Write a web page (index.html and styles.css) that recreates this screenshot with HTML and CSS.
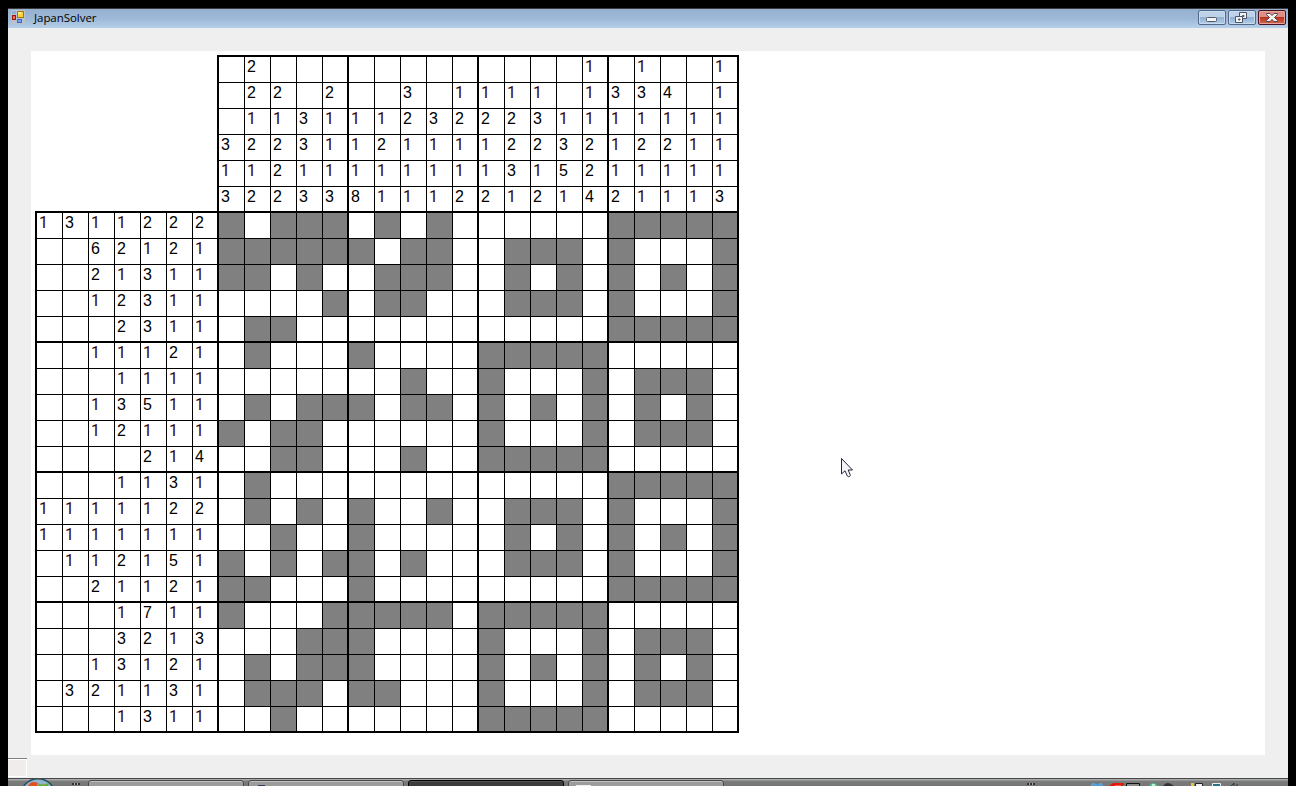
FILE: index.html
```html
<!DOCTYPE html>
<html lang="en">
<head>
<meta charset="utf-8">
<title>JapanSolver</title>
<link rel="stylesheet" href="styles.css">
</head>
<body>
<div class="screen">
  <div class="window">
    <header class="titlebar">
      <svg class="app-icon" width="14" height="14" viewBox="0 0 14 14">
        <rect width="14" height="14" fill="#b9c3cf"/>
        <rect x="1" y="1" width="4" height="3" fill="#8fb0d2"/>
        <rect x="6.5" y="1.5" width="6" height="6" fill="#ffd23c" stroke="#a87408"/>
        <rect x="7" y="2" width="3" height="2" fill="#ffeb94"/>
        <rect x="1.5" y="5.5" width="3" height="4" fill="#e86a58" stroke="#9c1408"/>
        <rect x="6.5" y="9.5" width="4" height="3" fill="#7da2f5" stroke="#3a66cc"/>
      </svg>
      <h1 class="title">JapanSolver</h1>
      <div class="controls">
        <button class="control" aria-label="Minimize">
          <svg width="24" height="11" viewBox="0 0 24 11"><rect x="6.5" y="5.5" width="10" height="4" rx="1" fill="#f4f4f4" stroke="#555b6b"/></svg>
        </button>
        <button class="control" aria-label="Restore">
          <svg width="24" height="11" viewBox="0 0 24 11"><g fill="#f4f4f4" stroke="#4c5468"><path d="M9.500.5h7v6h-7z"/><path d="M12.500 3.500h1.500v1h-1.500z"/><path d="M5.500 4.500h7v6h-7z"/><path d="M8.500 7h1.500v1h-1.500z" fill="#8fb0d2"/></g></svg>
        </button>
        <button class="control close" aria-label="Close">
          <svg width="24" height="11" viewBox="0 0 24 11"><path d="M6.500 1.500h3.500l2 2 2-2h3.500v1l-3 3 3 3v1h-3.500l-2-2-2 2h-3.500v-1l3-3-3-3z" fill="#f4f4f4" stroke="#5a4450"/></svg>
        </button>
      </div>
    </header>
    <main class="client">
      <section class="canvas">
        <div class="puzzle">
          <div class="corner"></div>
          <div class="cells column-hints" id="column-hints"></div>
          <div class="cells row-hints" id="row-hints"></div>
          <div class="cells field" id="field"></div>
        </div>
      </section>
      <div class="stub"></div>
    </main>
    <footer class="taskbar">
      <svg class="orb" width="36" height="7" viewBox="0 0 36 7">
        <circle cx="18" cy="17" r="18" fill="#254a63"/>
        <circle cx="18" cy="17" r="16.500" fill="#8db4cb"/>
        <path d="M8 7Q11 1 18 4L17 7z" fill="#e5501c"/>
        <path d="M19 4.500Q23 6.500 29 4L28 7H18z" fill="#6fa83a"/>
      </svg>
      <i class="grip"></i>
      <div class="tasks">
        <span class="task"></span>
        <span class="task"><i class="mark dark"></i></span>
        <span class="task active"></span>
        <span class="task"><i class="mark light"></i></span>
      </div>
      <i class="grip tray-grip"></i>
      <svg class="tray" width="160" height="4" viewBox="0 0 160 4">
        <path d="M1 4V2h1V1h3v1h2v1h1V2h1V1h3v1h1v2z" fill="#5aa0d4"/>
        <path d="M19 4l4-3h11v2l-2 1z" fill="#e01808"/><path d="M25 3h6v1h-6z" fill="#ff6048"/>
        <path d="M36.500 4V1.500h13V4" fill="#8a8a8a" stroke="#111"/>
        <path d="M59 4q4-6 9 0z" fill="#45c79c"/><path d="M62 2h3v2h-3z" fill="#b8f0d0"/>
        <path d="M73 4q4-6 11 0z" fill="#333"/>
        <path d="M101 1h3v3h-3z" fill="#ecc52d"/><path d="M105.500 4V1.500h7V4" fill="#eee" stroke="#222"/>
        <path d="M122.500 4V1.500h8V4" fill="#287090" stroke="#eee"/>
        <path d="M141 4l3-3v3M147 2v2" fill="none" stroke="#333"/>
      </svg>
    </footer>
  </div>
  <svg class="cursor" width="12" height="20" viewBox="0 0 12 20">
    <path d="M.5.500v15.500l3.500-3.200 2.300 5.200q1 1.200 2.400.4.900-.6.500-1.700l-2-4.700h4.300z" fill="#f5f5f8" stroke="#25253a"/>
  </svg>
</div>
<script src="puzzle.js"></script>
</body>
</html>
```
FILE: styles.css
```css
* { box-sizing: border-box; }
body { margin: 0; background: #000; }
.screen {
  position: relative;
  width: 1296px;
  height: 786px;
  padding: 8px 8px 0;
  overflow: hidden;
  background: #000;
}
.window { display: flex; flex-direction: column; height: 778px; }
.titlebar {
  display: flex;
  flex: none;
  height: 20px;
  border-top: 1px solid #393b3d;
  padding-left: 3px;
  background: linear-gradient(#96b1cf, #9db9d7 50%, #b6cfe9);
}
.app-icon { margin-top: 1px; }
.title {
  margin: 0 0 0 9px;
  font: 400 11.500px/18px "Open Sans", "Noto Sans", sans-serif;
  letter-spacing: -0.050px;
  color: #000;
}
.controls { display: flex; gap: 2px; margin: 1px 2px 0 auto; height: 15px; }
.control {
  display: block;
  width: 28px;
  height: 15px;
  padding: 1px;
  border: 1px solid #53688a;
  border-radius: 2px;
  box-shadow: inset 0 0 0 1px #c9dcef;
  background: linear-gradient(#bed3e9 45%, #91b0d1 50%, #b2cde8);
}
.control svg { display: block; }
.close {
  border-color: #4a1020;
  box-shadow: inset 0 0 0 1px #e3a79d;
  background: linear-gradient(#dd8e82 45%, #b93420 50%, #d0664e);
}
.client {
  display: flex;
  flex-direction: column;
  flex: 1;
  padding: 23px 23px 0;
  background: #efefef;
}
.canvas { flex: none; height: 704px; padding: 4px 0 0 4px; background: #fff; }
.stub {
  width: 19px;
  height: 18px;
  margin: 4px 0 0 -23px;
  border: solid #fff;
  border-width: 1px 1px 1px 0;
  box-shadow: 0 -1px #808080;
  background: #f0ecec;
}

.puzzle {
  display: grid;
  grid-template-columns: 182px 522px;
  grid-template-rows: 156px 522px;
  width: 704px;
}
.cells { display: grid; grid-auto-rows: 26px; }
.column-hints {
  grid-template-columns: repeat(20, 26px);
  border: solid #000;
  border-width: 1px 1px 0;
}
.row-hints {
  grid-template-columns: repeat(7, 26px);
  border: solid #000;
  border-width: 1px 0 1px 1px;
}
.field {
  grid-template-columns: repeat(20, 26px);
  border: 1px solid #000;
}
.cell {
  border: solid #000;
  border-width: 1px 0 0 1px;
  padding-left: 2px;
  font: 16px/20px "Liberation Sans", Arial, sans-serif;
  color: #000;
}
.cell.one { font-family: Roboto, "Liberation Sans", sans-serif; color: #300500; }
.cell.filled { background: #808080; }
.cell.edge-right { border-right-width: 1px; }
.cell.edge-bottom { border-bottom-width: 1px; }

.taskbar {
  display: flex;
  flex: none;
  height: 8px;
  border-top: 1px solid #484848;
  padding-left: 12px;
  overflow: hidden;
  background: linear-gradient(#aaa 1px, #7b7d7d 2px, #747676);
}
.orb { flex: none; }
.grip {
  flex: none;
  width: 8px;
  height: 2px;
  margin: 4px 0 0 16px;
  background: repeating-linear-gradient(90deg, #333 0 2px, #aaa 2px 3px);
}
.tasks { display: flex; gap: 4px; margin: 1px 0 0 8px; }
.task {
  width: 156px;
  height: 12px;
  border: 1px solid #484848;
  border-radius: 3px;
  box-shadow: inset 0 1px #c0c2c2;
  background: #9b9d9d;
}
.task.active { border-color: #000; background: #3c3c3c; box-shadow: inset 0 1px #555; }
.mark { display: block; width: 7px; height: 2px; margin: 4px 0 0 9px; background: #34365e; }
.mark.light { width: 15px; margin-left: 7px; background: #eee; }
.tray-grip { margin-left: 303px; }
.tray { flex: none; margin: 3px 0 0 55px; }
.cursor { position: absolute; left: 841px; top: 458px; }
```
FILE: puzzle.js
```js
const columnHints = [
  ".2............1.1..1",
  ".22.2..3.1111.1334.1",
  ".1131112322231111111",
  "32231121111223212211",
  "11211111111315211111",
  "32233811122121421113"
];
const rowHints = [
  "1311222", "..62121", "..21311", "..12311", "...2311",
  "..11121", "...1111", "..13511", "..12111", "....214",
  "...1131", "1111122", "1111111", ".112151", "..21121",
  "...1711", "...3213", "..13121", ".321131", "...1311"
];
const field = [
  "#.###.#.#......#####",
  "######.##..###.#...#",
  "##.#..###..#.#.#.#.#",
  "....#.##...###.#...#",
  ".##............#####",
  ".#...#....#####.....",
  ".......#..#...#.###.",
  ".#.###.##.#.#.#.#.#.",
  "#.##......#...#.###.",
  "..##...#..#####.....",
  ".#.............#####",
  ".#.#.#..#..###.#...#",
  "..#..#.....#.#.#.#.#",
  "#.#.##.#...###.#...#",
  "##...#.........#####",
  "#...#####.#####.....",
  "...###....#...#.###.",
  ".#.###....#.#.#.#.#.",
  ".###.##...#...#.###.",
  "..#.......#####....."
];

// Every fifth line is two pixels thick, so the cell before it gets an extra edge.
function render(id, rows, groupColumns, groupRows) {
  const box = document.getElementById(id);
  rows.forEach((row, y) => {
    [...row].forEach((value, x) => {
      const cell = document.createElement("div");
      cell.className = "cell";
      if (value === "#") cell.classList.add("filled");
      else if (value !== ".") cell.textContent = value;
      if (value === "1") cell.classList.add("one");
      if (groupColumns && x % 5 === 4) cell.classList.add("edge-right");
      if (groupRows && y % 5 === 4) cell.classList.add("edge-bottom");
      box.append(cell);
    });
  });
}
render("column-hints", columnHints, true, false);
render("row-hints", rowHints, false, true);
render("field", field, true, true);
```
